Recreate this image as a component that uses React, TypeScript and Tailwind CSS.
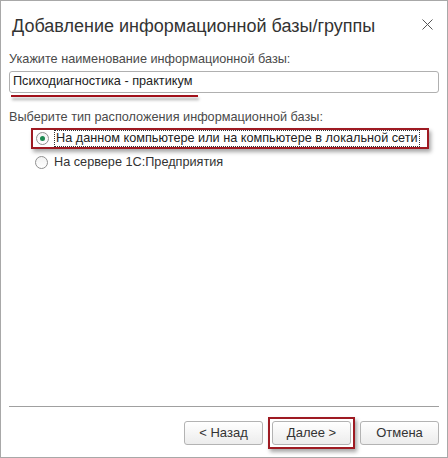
import React from "react";

function Radio({ checked }: { checked?: boolean }) {
  return (
    <span className="w-[13px] h-[13px] rounded-full border border-[#8f8f8f] bg-gradient-to-b from-[#f2f2f2] to-white flex items-center justify-center shrink-0">
      {checked && <span className="w-[5px] h-[5px] rounded-full bg-[#1d8a52]" />}
    </span>
  );
}

function Btn({ children }: { children: React.ReactNode }) {
  return (
    <div className="w-[79px] h-[24px] rounded-[3px] border border-[#b3b3b3] bg-gradient-to-b from-white to-[#ececec] flex items-center justify-center text-[13px] text-[#333]">
      {children}
    </div>
  );
}

export default function App() {
  return (
    <div className="w-[448px] h-[458px] bg-white border border-[#a8a8a8] flex flex-col font-['Liberation_Sans',Arial,sans-serif] text-[#4a4a4a] whitespace-nowrap">
      <div className="flex items-center justify-between pl-[11px] pr-[14px] pt-[10px] h-[39px]">
        <span className="text-[18px] leading-[22px] text-[#333]">Добавление информационной базы/группы</span>
        <svg width="11" height="11" viewBox="0 0 11 11" className="mt-[-2px]">
          <path d="M0.5 0.5 L10.5 10.5 M10.5 0.5 L0.5 10.5" stroke="#555" strokeWidth="1" />
        </svg>
      </div>
      <div className="px-[8px] pt-[11px] flex flex-col">
        <div className="text-[12.7px] leading-[16px]">Укажите наименование информационной базы:</div>
        <div className="mt-[4px] h-[22px] rounded-[3px] border border-[#b0b0b0] flex items-center pl-[3px] text-[12.7px] text-[#222]">
          Психодиагностика - практикум
        </div>
        <div className="mt-[2px] ml-[2px] w-[187px] h-[2px] bg-[#a2111b] shadow-[1px_3px_3px_rgba(0,0,0,0.35)]" />
        <div className="mt-[12px] text-[12.7px] leading-[16px]">Выберите тип расположения информационной базы:</div>
        <div className="mt-[3px] ml-[22px] w-[398px] h-[21px] border-2 border-[#9e1a22] shadow-[2px_3px_4px_rgba(0,0,0,0.35)] flex items-center pl-[3px] gap-[5px]">
          <Radio checked />
          <span className="text-[12.7px] leading-[15px] text-[#222] border border-dotted border-[#333] px-[1px]">
            На данном компьютере или на компьютере в локальной сети
          </span>
        </div>
        <div className="mt-[5px] ml-[26px] flex items-center gap-[6px]">
          <Radio />
          <span className="text-[12.7px] leading-[16px] text-[#333]">На сервере 1С:Предприятия</span>
        </div>
      </div>
      <div className="flex-1" />
      <div className="mx-[8px] border-t border-[#a0a0a0]" />
      <div className="flex justify-end items-center pr-[8px] pt-[10px] pb-[8px] gap-[5px]">
        <Btn>&lt; Назад</Btn>
        <div className="p-[2px] border-2 border-[#9e1a22] shadow-[2px_3px_4px_rgba(0,0,0,0.35)]">
          <Btn>Далее &gt;</Btn>
        </div>
        <Btn>Отмена</Btn>
      </div>
    </div>
  );
}
